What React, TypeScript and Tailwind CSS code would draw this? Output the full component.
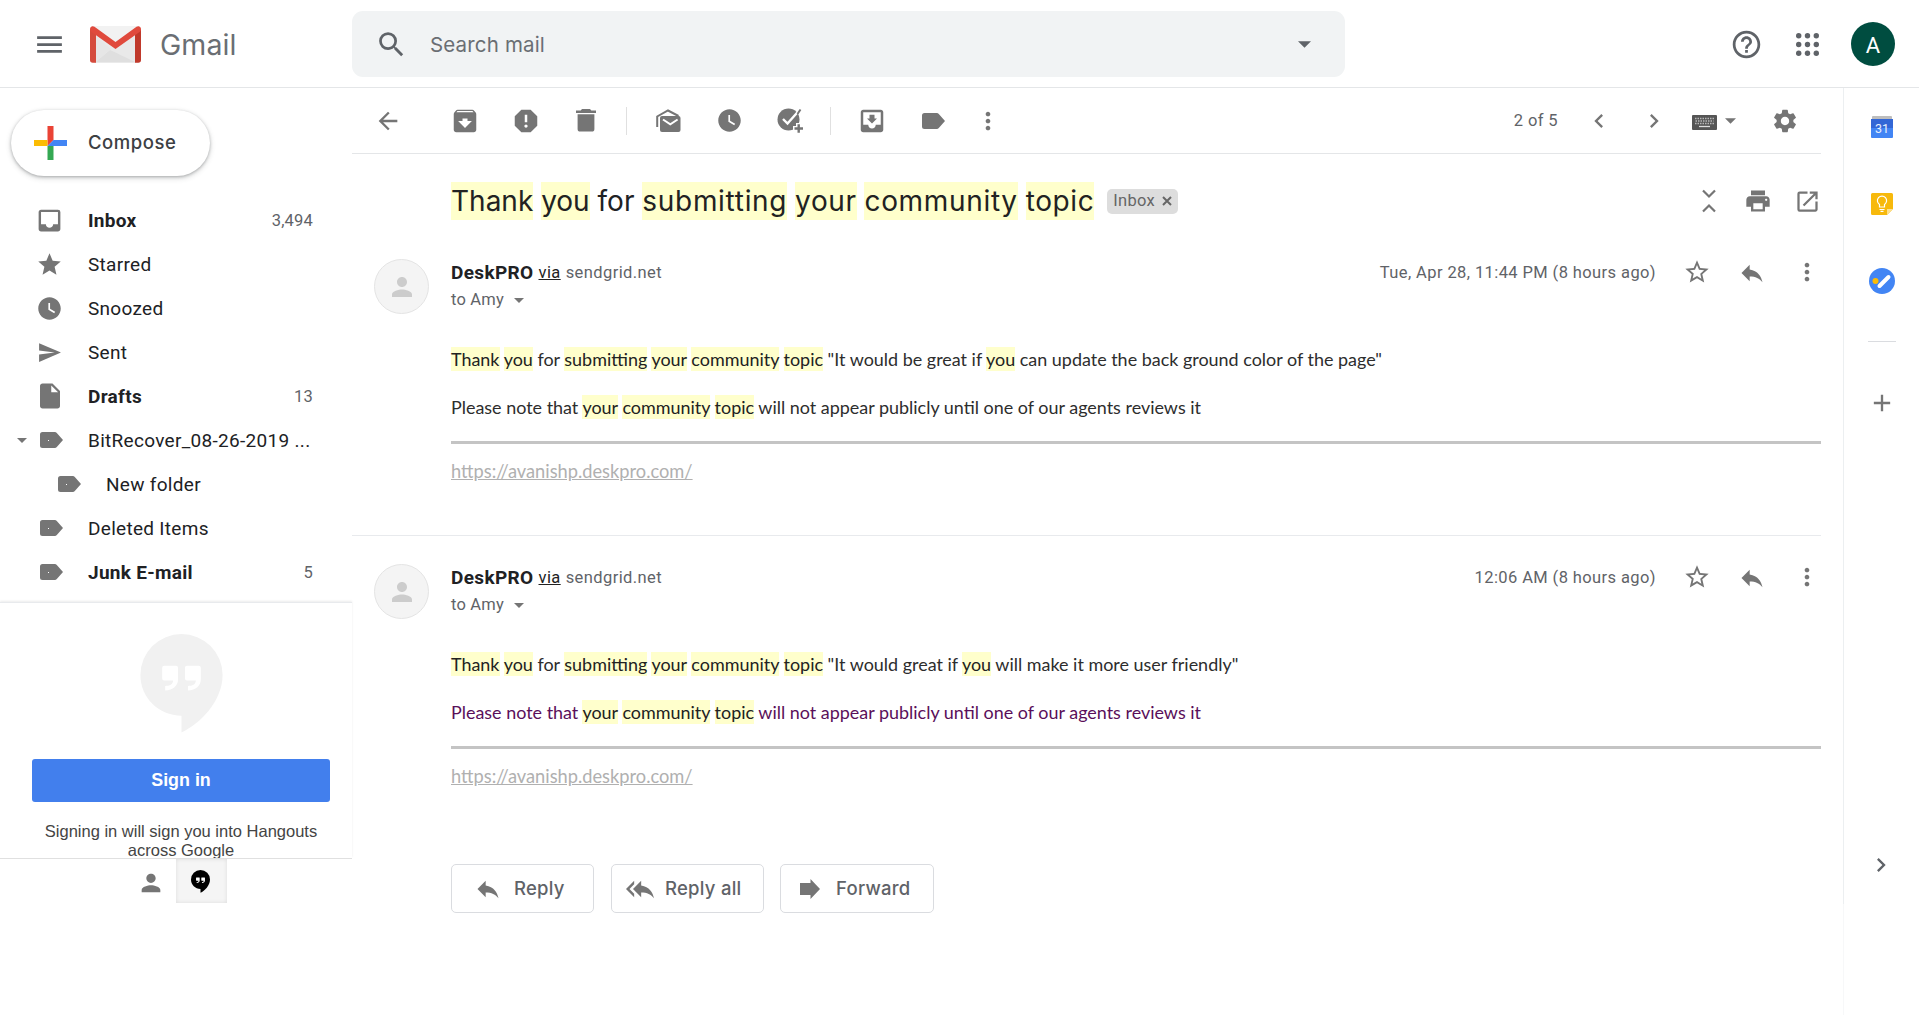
import { type ReactNode } from 'react';
import {
  MdMenu, MdSearch, MdHelpOutline, MdArrowBack, MdArchive, MdReport, MdWatchLater, MdMoveToInbox,
  MdMoreVert, MdChevronLeft, MdChevronRight, MdSettings, MdPrint, MdOpenInNew,
  MdStarBorder, MdReply, MdReplyAll, MdInbox, MdStar, MdSend, MdInsertDriveFile, MdPerson, MdAdd,
} from 'react-icons/md';

const Caret = ({ className = '' }: { className?: string }) => (
  <svg viewBox="0 0 10 5" className={className} fill="currentColor"><path d="M0 0h10L5 5z" /></svg>
);

const Trash = () => (
  <svg width="20" height="23" viewBox="0 0 20 23" fill="currentColor">
    <path d="M6 0h8l1.3 1.4H20V4H0V1.4h4.7zM1.6 5.3h16.8V20a2.6 2.6 0 0 1-2.6 2.6H4.2A2.6 2.6 0 0 1 1.6 20z" />
  </svg>
);

const MarkRead = () => (
  <svg width="25" height="24" viewBox="0 0 25 24" fill="none">
    <path d="M1.2 18V7.5L12 1.5 22.5 7" stroke="currentColor" strokeWidth="2" />
    <rect x="4" y="7" width="20.5" height="16" rx="2" fill="currentColor" />
    <path d="M7 10.5l7.3 4.8 7.3-4.8" stroke="#fff" strokeWidth="2" />
  </svg>
);

const AddTask = () => (
  <svg width="27" height="27" viewBox="0 0 27 27" fill="none">
    <circle cx="11.5" cy="12.5" r="11" fill="currentColor" />
    <path d="M6 12l4.5 4.5L22.5 3" stroke="#fff" strokeWidth="2.4" />
    <path d="M20.5 7l3-4.5" stroke="currentColor" strokeWidth="2" />
    <path d="M16 21.5h11M21.5 16v11" stroke="#fff" strokeWidth="5" />
    <path d="M17.5 21.5H26M21.7 17.3v8.5" stroke="currentColor" strokeWidth="2.4" />
  </svg>
);

const Label = ({ dot = false }: { dot?: boolean }) => (
  <svg width="23" height="16" viewBox="0 0 23 16">
    <path d="M2.5 0h12.3c.8 0 1.5.4 2 1L23 8l-6.2 7c-.5.6-1.2 1-2 1H2.5A2.5 2.5 0 0 1 0 13.5v-11A2.5 2.5 0 0 1 2.5 0z" fill="currentColor" />
    {dot && <rect x="8" y="8" width="1" height="1" fill="#fff" shapeRendering="crispEdges" />}
  </svg>
);

const Collapse = () => (
  <svg width="14" height="24" viewBox="0 0 14 24" fill="none" stroke="currentColor" strokeWidth="2.2">
    <path d="M1 1.5l6 6 6-6M1 22.5l6-6 6 6" />
  </svg>
);

const Keyboard = () => (
  <svg width="25" height="15" viewBox="0 0 25 15">
    <rect width="25" height="15" rx="1" fill="#555" />
    <g stroke="#b8b8b8" strokeWidth="1.3" strokeDasharray="1.5 1">
      <path d="M3 3.5h19M3.5 6h18M3 8.5h19" />
    </g>
    <path d="M7 11.5h11" stroke="#ddd" strokeWidth="1.3" />
  </svg>
);

const Forward = () => (
  <svg width="20" height="20" viewBox="0 0 20 20" fill="currentColor"><path d="M0 4h10.5V0L20 10l-9.5 10v-4H0z" /></svg>
);

const Cross = () => (
  <svg width="10" height="10" viewBox="0 0 10 10" stroke="currentColor" strokeWidth="2"><path d="M1 1l8 8M9 1L1 9" /></svg>
);

const Apps = () => (
  <svg width="23" height="23" viewBox="0 0 23 23" fill="currentColor">
    {[2.7, 11.5, 20.3].map((y) => [2.7, 11.5, 20.3].map((x) => <circle key={`${x}-${y}`} cx={x} cy={y} r="2.7" />))}
  </svg>
);

const Bubble = ({ className, fill, quote }: { className: string; fill: string; quote: string }) => (
  <svg viewBox="0 0 83 100" className={className}>
    <path d="M41.5 0A41.5 41.5 0 0 0 0 41.5C0 64.5 18.5 82.5 41.5 82.5V99.5C60 91 83 68 83 41.5A41.5 41.5 0 0 0 41.5 0z" fill={fill} />
    <path d="M24 32h12a2 2 0 0 1 2 2v12c0 6-5 11-13 11v-4.5c4.5 0 8-1.5 8-5.5h-9a2 2 0 0 1-2-2V34a2 2 0 0 1 2-2zM47 32h12a2 2 0 0 1 2 2v12c0 6-5 11-13 11v-4.5c4.5 0 8-1.5 8-5.5h-9a2 2 0 0 1-2-2V34a2 2 0 0 1 2-2z" fill={quote} />
  </svg>
);

const GmailLogo = () => (
  <svg width="51" height="37" viewBox="0 0 51 37">
    <path d="M2 0h47v36.5H2z" fill="#e9e9e9" />
    <path d="M3 0h45L25.5 17z" fill="#f2f2f2" />
    <path d="M5 36.5L20 24l5.5 2.5L46 36.5z" fill="#dfdfdf" />
    <path d="M5 36.5V10l16 13z" fill="#e6e6e6" />
    <path d="M0 3v31a2.8 2.8 0 0 0 2.8 2.8H6V7z" fill="#d54b3d" />
    <path d="M51 3v31a2.8 2.8 0 0 1-2.8 2.8H45V7z" fill="#c0392b" />
    <path d="M0 3C0 .5 2.6-.6 4.5.8L25.5 16 46.5.8C48.4-.6 51 .5 51 3c0 1.5-.7 2.5-1.8 3.3L25.5 23 1.8 6.3C.7 5.5 0 4.5 0 3z" fill="#e04a3d" />
  </svg>
);

const Cell = ({ className = '', children }: { className?: string; children: ReactNode }) => (
  <div className={`flex shrink-0 items-center justify-center ${className}`}>{children}</div>
);

const Hl = ({ children, className = 'py-px' }: { children: string; className?: string }) => (
  <span className={`bg-[#ffffcc] text-[#222] ${className}`}>{children}</span>
);

const Header = () => (
  <header className="flex h-[88px] shrink-0 items-center border-b border-[#e4e6e8] pt-px text-[#5f6368]">
    <div className="flex w-[352px] items-center pl-[33px]">
      <MdMenu size={33} />
      <div className="ml-6"><GmailLogo /></div>
      <span className="mt-[2px] ml-[19px] text-[28.5px] leading-none tracking-[0.1px] text-[#6a6e73]">Gmail</span>
    </div>
    <div className="flex h-[66px] w-[993px] items-center rounded-[11px] bg-[#f1f3f4] pr-[34px] pl-[23px]">
      <MdSearch size={33} />
      <span className="mt-[2px] ml-[22px] flex-1 text-[20.5px] tracking-[0.16px] text-[#6a6e73]">Search mail</span>
      <Caret className="h-[7px] w-[13px]" />
    </div>
    <div className="ml-auto flex items-center pr-6">
      <MdHelpOutline size={33} />
      <div className="ml-[33px]"><Apps /></div>
      <Cell className="ml-8 h-11 w-11 rounded-full bg-[#004d40] pt-[2px] font-[Roboto] text-[22px] text-white">A</Cell>
    </div>
  </header>
);

type Folder = { name: string; icon: ReactNode; count?: string; bold?: boolean; caret?: boolean; nested?: boolean; tag?: boolean };
const folders: Folder[] = [
  { name: 'Inbox', icon: <MdInbox size={29} />, count: '3,494', bold: true },
  { name: 'Starred', icon: <MdStar size={27} /> },
  { name: 'Snoozed', icon: <MdWatchLater size={27} /> },
  { name: 'Sent', icon: <MdSend size={25} /> },
  { name: 'Drafts', icon: <MdInsertDriveFile size={30} />, count: '13', bold: true },
  { name: 'BitRecover_08-26-2019 ...', icon: <Label dot />, caret: true, tag: true },
  { name: 'New folder', icon: <Label dot />, nested: true, tag: true },
  { name: 'Deleted Items', icon: <Label dot />, tag: true },
  { name: 'Junk E-mail', icon: <Label dot />, count: '5', bold: true, tag: true },
];

const Sidebar = () => (
  <aside className="flex w-[352px] shrink-0 flex-col">
    <button className="mt-[22px] ml-[11px] flex h-[66px] w-[199px] items-center rounded-full bg-white pl-[23px] shadow-[0_1px_3px_rgba(60,64,67,0.35),0_2px_5px_1px_rgba(60,64,67,0.15)]">
      <svg width="33" height="34" viewBox="0 0 33 34">
        <path d="M13.5 0h6v14l-6 6z" fill="#ea4335" />
        <path d="M0 14h13.5v6H0z" fill="#fbbc04" />
        <path d="M13.5 20h6v14h-6z" fill="#34a853" />
        <path d="M19.5 14H33v6H13.5z" fill="#4285f4" />
      </svg>
      <span className="ml-[21px] text-[18.5px] font-medium tracking-[0.55px] text-[#3c4043]">Compose</span>
    </button>
    <nav className="mt-[22px] h-[404px] font-[Roboto] text-[#202124]">
      {folders.map((f) => (
        <div key={f.name} className={`flex h-11 items-center pr-[39px] ${f.nested ? 'pl-[35px]' : 'pl-[17px]'}`}>
          <span className="w-[17px] text-[#757575]">{f.caret && <Caret className="h-[5px] w-[10px]" />}</span>
          <div className={`flex w-[31px] shrink-0 items-center text-[#757575] ${f.tag ? 'pl-[6px]' : 'justify-center'}`}>{f.icon}</div>
          <span className={`mt-[2px] ml-[23px] text-[19px] tracking-[0.3px] whitespace-nowrap ${f.bold ? 'font-bold' : ''}`}>{f.name}</span>
          {f.count && <span className="mt-[2px] ml-auto text-[16.5px] tracking-[0.2px] text-[#5f6368]">{f.count}</span>}
        </div>
      ))}
    </nav>
    <section className="h-[256px] overflow-hidden border-t border-[#e8eaed] font-['Liberation_Sans'] shadow-[0_-1px_2px_rgba(0,0,0,0.08)]">
      <div className="flex w-[362px] flex-col items-center">
        <Bubble className="mt-[31px] h-[99px] w-[83px]" fill="#f1f1f1" quote="#fff" />
        <button className="mt-[26px] h-[43px] w-[298px] rounded-[3px] bg-[#427fed] text-[17.875px] font-bold text-white">Sign in</button>
        <p className="mt-5 text-center text-[16.5px] leading-[19px] text-[#444]">Signing in will sign you into Hangouts<br />across Google</p>
      </div>
    </section>
    <div className="flex h-[45px] border-t border-[#e0e0e0] text-[#757575]">
      <Cell className="ml-[125px] w-[51px] pt-[3px]"><MdPerson size={28} /></Cell>
      <Cell className="w-[51px] bg-[#f5f5f5] pt-px pr-[2px] shadow-[inset_0_0_4px_rgba(0,0,0,0.1)]"><Bubble className="h-[23px] w-[19px]" fill="#000" quote="#fff" /></Cell>
    </div>
  </aside>
);

const Toolbar = () => (
  <div className="flex h-[66px] items-center border-b border-[#e4e6e8] text-[#757575]">
    <Cell className="mr-8 ml-[21px] w-[30px]"><MdArrowBack size={28} /></Cell>
    <Cell className="w-[60.5px]"><MdArchive size={30} /></Cell>
    <Cell className="w-[60.5px]"><MdReport size={30} /></Cell>
    <Cell className="w-[60.5px]"><Trash /></Cell>
    <Cell className="w-[22px]"><div className="-ml-[2px] h-7 w-px bg-[#e0e0e0]" /></Cell>
    <Cell className="w-[60.5px]"><MarkRead /></Cell>
    <Cell className="w-[60.5px]"><MdWatchLater size={27} /></Cell>
    <Cell className="w-[60.5px]"><div className="ml-[2px]"><AddTask /></div></Cell>
    <Cell className="w-[22px]"><div className="-ml-[2px] h-7 w-px bg-[#e0e0e0]" /></Cell>
    <Cell className="w-[60.5px]"><MdMoveToInbox size={30} /></Cell>
    <Cell className="w-[60.5px]"><div className="ml-px"><Label /></div></Cell>
    <Cell className="w-[50.5px]"><MdMoreVert size={28} /></Cell>
    <div className="ml-auto flex items-center font-[Roboto] text-[16.5px] text-[#5f6368]">
      <span className="mt-[2px] tracking-[0.4px]">2 of 5</span>
      <Cell className="ml-[13px] w-[56px] text-[#757575]"><MdChevronLeft size={28} /></Cell>
      <Cell className="w-[54px] text-[#757575]"><MdChevronRight size={28} /></Cell>
      <Cell className="mt-[3px] ml-[11px]"><Keyboard /></Cell>
      <Caret className="ml-2 h-[6px] w-[11px] text-[#757575]" />
      <Cell className="mr-[22px] ml-[35px] text-[#757575]"><MdSettings size={28} /></Cell>
    </div>
  </div>
);

const Message = ({ date, className, children }: { date: string; className: string; children: ReactNode }) => (
  <article className={`flex pl-[22px] ${className}`}>
    <Cell className="mt-[28px] h-[55px] w-[55px] rounded-full border border-[#e4e4e4] bg-[#f4f4f4] text-[#ccc]"><MdPerson size={30} /></Cell>
    <div className="ml-[22px] flex min-w-0 flex-1 flex-col">
      <div className="mt-[27px] flex h-[28px] items-center pt-[2px] font-[Roboto] text-[16.5px] tracking-[0.4px] text-[#5f6368]">
        <span className="text-[19px] font-bold tracking-[0.35px] text-[#202124]">DeskPRO</span>
        <span className="ml-[5px] text-[#222] underline">via</span>
        <span className="ml-[5px]">sendgrid.net</span>
        <span className="ml-auto">{date}</span>
        <Cell className="-mt-[2px] ml-[27px] w-7 text-[#757575]"><MdStarBorder size={28} /></Cell>
        <Cell className="-mt-[1px] ml-[27px] w-7 text-[#757575]"><MdReply size={28} /></Cell>
        <Cell className="-mt-[2px] ml-[27px] w-7 text-[#757575]"><MdMoreVert size={28} /></Cell>
      </div>
      <div className="flex h-[26px] items-center pt-[2px] font-[Roboto] text-[16.5px] tracking-[0.2px] text-[#5f6368]">
        <span>to Amy</span>
        <Caret className="ml-[10px] h-[5px] w-[10px] text-[#757575]" />
      </div>
      {children}
    </div>
  </article>
);

const Body = ({ first, second, secondClass }: { first: ReactNode; second: ReactNode; secondClass: string }) => (
  <div className="font-[Lato] text-[17.95px] text-[#2d2d2d]">
    <p className="mt-[35px] h-6 leading-6 whitespace-nowrap">{first}</p>
    <p className={`mt-6 h-6 leading-6 whitespace-nowrap ${secondClass}`}>{second}</p>
    <hr className="mt-[22px] h-[3px] border-0 bg-[#c4c4c4]" />
    <p className="mt-[15px] text-[18.25px] leading-6 text-[#b0b0b0]"><span className="underline">https://avanishp.deskpro.com/</span></p>
  </div>
);

const Notice = () => (
  <><Hl>Thank</Hl> <Hl>you</Hl> for <Hl>submitting</Hl> <Hl>your</Hl> <Hl>community</Hl> <Hl>topic</Hl></>
);
const Note = () => (
  <>Please note that <Hl>your</Hl> <Hl>community</Hl> <Hl>topic</Hl> will not appear publicly until one of our agents reviews it</>
);

const Action = ({ className, icon, children }: { className: string; icon: ReactNode; children: string }) => (
  <button className={`flex h-[49px] items-center rounded-[5px] border border-[#dadce0] text-[#5f6368] ${className}`}>
    <span className="text-[#757575]">{icon}</span>
    <span className="text-[18.5px] font-medium tracking-[0.25px]">{children}</span>
  </button>
);

const Thread = () => (
  <main className="flex w-[1469px] shrink-0 flex-col">
    <Toolbar />
    <div className="flex h-[77px] items-center pt-[17px] pl-[99px]">
      <h1 className="text-[28px] leading-[38px] whitespace-nowrap text-[#202124]">
        <Hl className="py-[2px]">Thank</Hl> <Hl className="py-[2px]">you</Hl> for <Hl className="py-[2px] tracking-[0.7px]">submitting</Hl>{' '}
        <Hl className="py-[2px] tracking-[0.6px]">your</Hl> <Hl className="py-[2px] tracking-[0.68px]">community</Hl>{' '}
        <Hl className="py-[2px] tracking-[0.6px]">topic</Hl>
      </h1>
      <span className="ml-[13px] flex h-[25px] w-[71px] items-center justify-between rounded-[5px] bg-[#ddd] pr-[6px] pl-[6px] font-[Roboto] text-[16.5px] tracking-[0.3px] text-[#666]">
        Inbox<Cross />
      </span>
      <div className="ml-auto flex text-[#757575]">
        <Cell className="w-[49px]"><Collapse /></Cell>
        <Cell className="w-[49px]"><MdPrint size={28} /></Cell>
        <Cell className="-mr-[11px] w-[50px]"><MdOpenInNew size={27} /></Cell>
      </div>
    </div>
    <Message className="h-[304px]" date="Tue, Apr 28, 11:44 PM (8 hours ago)">
      <Body first={<><Notice /> "It would be great if <Hl>you</Hl> can update the back ground color of the page"</>} second={<Note />} secondClass="" />
    </Message>
    <div className="h-px bg-[#e8eaed]" />
    <Message className="h-[306px]" date="12:06 AM (8 hours ago)">
      <Body first={<><Notice /> "It would great if <Hl>you</Hl> will make it more user friendly"</>} second={<Note />} secondClass="text-[#5a0f5a]" />
    </Message>
    <div className="mt-[22px] flex pl-[99px]">
      <Action className="w-[143px] gap-3 pl-[22px]" icon={<MdReply size={28} />}>Reply</Action>
      <Action className="ml-[17px] w-[153px] gap-[11px] pl-[14px]" icon={<MdReplyAll size={28} />}>Reply all</Action>
      <Action className="ml-4 w-[154px] gap-[16px] pl-[19px]" icon={<Forward />}>Forward</Action>
    </div>
  </main>
);

const Rail = () => (
  <aside className="ml-[22px] flex flex-1 flex-col">
    <div className="flex h-[816px] flex-col items-center border-l border-[#eceff1] pl-px">
      <svg className="mt-[28px]" width="22" height="22" viewBox="0 0 22 22">
        <rect x="1" width="20" height="4" rx="1" fill="#bdbdbd" />
        <rect y="3" width="22" height="19" rx="1" fill="#4285f4" />
        <rect y="3" width="22" height="9" fill="#3367d6" />
        <text x="11" y="17" textAnchor="middle" fontFamily="Roboto" fontSize="12.5" fill="#e8f0fe">31</text>
      </svg>
      <svg className="mt-[55px]" width="22" height="22" viewBox="0 0 22 22">
        <path d="M1.5 0h19A1.5 1.5 0 0 1 22 1.5V16l-6 6H1.5A1.5 1.5 0 0 1 0 20.5v-19A1.5 1.5 0 0 1 1.5 0z" fill="#f7b90c" />
        <path d="M22 16l-6 6v-6z" fill="#fde08f" />
        <path d="M8.5 14v-2.5a4.6 4.6 0 1 1 5 0V14zM8.5 16.5h5M9.5 18.3h3" fill="none" stroke="#fff" strokeWidth="1.2" />
      </svg>
      <svg className="mt-[53px]" width="26" height="26" viewBox="0 0 26 26">
        <circle cx="13" cy="13" r="13" fill="#4285f4" />
        <circle cx="6.5" cy="13" r="3" fill="#fbbc04" />
        <path d="M10.5 18L19.5 9" stroke="#fff" strokeWidth="4" strokeLinecap="round" />
      </svg>
      <div className="mt-[47px] h-px w-7 bg-[#dadce0]" />
      <MdAdd className="mt-[47px] text-[#757575]" size={28} />
      <MdChevronRight className="mt-[434px] mr-[2px] text-[#5f6368]" size={28} />
    </div>
    <div className="flex-1 border-l border-[#f7f8f9]" />
  </aside>
);

export default function App() {
  return (
    <div className="flex h-[1015px] w-[1919px] flex-col overflow-hidden bg-white font-[Inter,sans-serif]">
      <Header />
      <div className="flex min-h-0 flex-1">
        <Sidebar />
        <Thread />
        <Rail />
      </div>
    </div>
  );
}
